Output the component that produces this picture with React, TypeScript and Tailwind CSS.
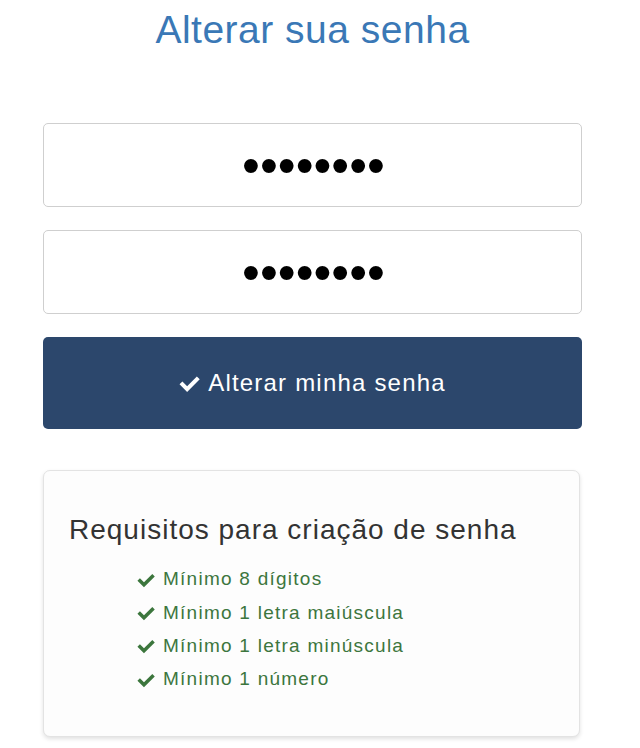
import React from "react";

function Check({ className }: { className?: string }) {
  return (
    <svg viewBox="0 0 16 16" className={className} fill="currentColor" aria-hidden="true">
      <path d="M13.6 2.6 6.2 10 2.6 6.4 0.4 8.6 6.2 14.4 15.8 4.8z" />
    </svg>
  );
}

export default function App() {
  const reqs = [
    "Mínimo 8 dígitos",
    "Mínimo 1 letra maiúscula",
    "Mínimo 1 letra minúscula",
    "Mínimo 1 número",
  ];
  return (
    <div className="min-h-[748px] bg-white pt-[4px] font-['Liberation_Sans',Arial,sans-serif]">
      <div className="ml-[43px] w-[539px]">
        <h1 className="text-center text-[39px] leading-[52px] tracking-[0.5px] text-[#3a78b6]">
          Alterar sua senha
        </h1>
        <div className="mt-[67px] flex flex-col gap-[23px]">
          <input
            type="password"
            readOnly
            value="12345678"
            className="h-[84px] w-full rounded-[5px] border border-[#cfcfcf] bg-white pl-[2px] text-center text-[51px] text-black outline-none"
          />
          <input
            type="password"
            readOnly
            value="12345678"
            className="h-[84px] w-full rounded-[5px] border border-[#cfcfcf] bg-white pl-[2px] text-center text-[51px] text-black outline-none"
          />
          <button className="flex h-[92px] w-full items-center justify-center gap-[8px] rounded-[5px] bg-[#2c476c] text-[24px] tracking-[1.2px] text-white">
            <Check className="h-[21px] w-[21px]" />
            <span>Alterar minha senha</span>
          </button>
        </div>
        <div className="mt-[41px] h-[267px] w-[537px] rounded-[7px] border border-[#e3e3e3] bg-[#fdfdfd] px-[25px] pt-[40px] shadow-[0_2px_4px_rgba(0,0,0,0.12)]">
          <h2 className="text-[28px] leading-[38px] tracking-[1px] text-[#333]">Requisitos para criação de senha</h2>
          <ul className="mt-[14px] pl-[68px]">
            {reqs.map((r) => (
              <li key={r} className="flex h-[33.3px] items-center gap-[8px] text-[19px] tracking-[1.25px] text-[#3c763d]">
                <Check className="h-[18px] w-[18px]" />
                <span>{r}</span>
              </li>
            ))}
          </ul>
        </div>
      </div>
    </div>
  );
}
